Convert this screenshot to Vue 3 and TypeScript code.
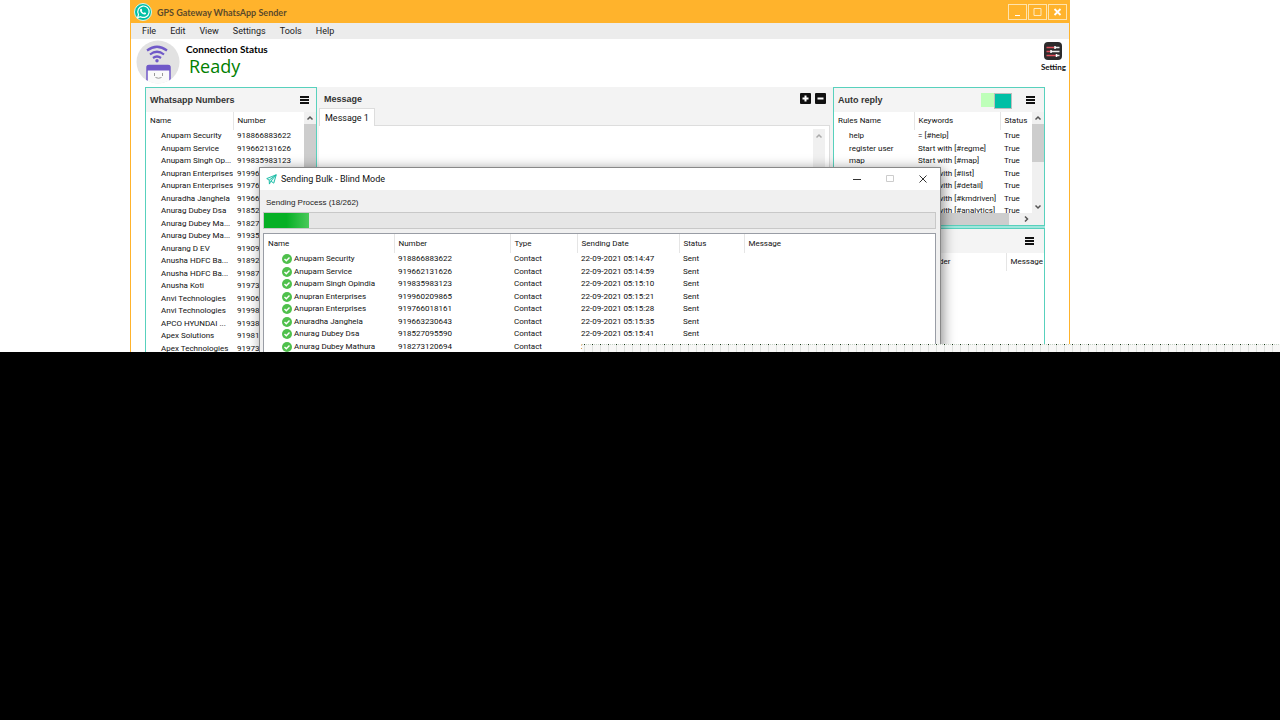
<script setup lang="ts">
import { ref } from 'vue'

interface Contact { name: string; number: string }
interface Rule { name: string; keyword: string }
interface Sent { name: string; number: string; date: string }

const menus: string[] = ['File', 'Edit', 'View', 'Settings', 'Tools', 'Help']

const contacts: Contact[] = [
  { name: 'Anupam Security', number: '918866883622' },
  { name: 'Anupam Service', number: '919662131626' },
  { name: 'Anupam Singh Op...', number: '919835983123' },
  { name: 'Anupran Enterprises', number: '91996' },
  { name: 'Anupran Enterprises', number: '91976' },
  { name: 'Anuradha Janghela', number: '91966' },
  { name: 'Anurag Dubey Dsa', number: '91852' },
  { name: 'Anurag Dubey Ma...', number: '91827' },
  { name: 'Anurag Dubey Ma...', number: '91935' },
  { name: 'Anurang D EV', number: '91909' },
  { name: 'Anusha HDFC Ba...', number: '91892' },
  { name: 'Anusha HDFC Ba...', number: '91987' },
  { name: 'Anusha Koti', number: '91973' },
  { name: 'Anvi Technologies', number: '91906' },
  { name: 'Anvi Technologies', number: '91998' },
  { name: 'APCO HYUNDAI ...', number: '91938' },
  { name: 'Apex Solutions', number: '91981' },
  { name: 'Apex Technologies', number: '91973' },
]

const rules: Rule[] = [
  { name: 'help', keyword: '= [#help]' },
  { name: 'register user', keyword: 'Start with [#regme]' },
  { name: 'map', keyword: 'Start with [#map]' },
  { name: 'list', keyword: 'Start with [#list]' },
  { name: 'detail', keyword: 'Start with [#detail]' },
  { name: 'kmdriven', keyword: 'Start with [#kmdriven]' },
  { name: 'analytics', keyword: 'Start with [#analytics]' },
]

const sent: Sent[] = [
  { name: 'Anupam Security', number: '918866883622', date: '22-09-2021 05:14:47' },
  { name: 'Anupam Service', number: '919662131626', date: '22-09-2021 05:14:59' },
  { name: 'Anupam Singh Opindia', number: '919835983123', date: '22-09-2021 05:15:10' },
  { name: 'Anupran Enterprises', number: '919960209865', date: '22-09-2021 05:15:21' },
  { name: 'Anupran Enterprises', number: '919766018161', date: '22-09-2021 05:15:28' },
  { name: 'Anuradha Janghela', number: '919663230643', date: '22-09-2021 05:15:35' },
  { name: 'Anurag Dubey Dsa', number: '918527095590', date: '22-09-2021 05:15:41' },
  { name: 'Anurag Dubey Mathura', number: '918273120694', date: '22-09-2021 05:15:47' },
]

const autoReply = ref(true)
const message = ref('')
const done = 18
const total = 262
</script>

<template>
  <div class="page">
    <main class="stage">
      <section class="window">
        <header class="titlebar">
          <svg class="wa" viewBox="0 0 18 18" aria-hidden="true">
            <circle cx="9" cy="9" r="8.5" fill="#00bfa5" stroke="#d9f5ee" />
            <path d="M3.6 14.6l.9-3.1a5.7 5.7 0 1 1 2.2 2.2z" fill="none" stroke="#fff" stroke-width="1.2" />
            <path d="M6.5 6c.4-.5 1-.4 1.2.1l.5 1.1-.5.8c.5.9 1.2 1.6 2.2 2l.8-.7 1.300.6c.3 1-.8 1.700-1.600 1.700-2.300-.2-4.400-2.500-4.400-4.300 0-.5.2-.9.500-1.300z" fill="#fff" />
          </svg>
          <h1>GPS Gateway WhatsApp Sender</h1>
          <div class="winbtns">
            <button type="button" aria-label="Minimize"><svg viewBox="0 0 17 14"><path d="M6 10.500h5" stroke="#fff" /></svg></button>
            <button type="button" aria-label="Maximize"><svg viewBox="0 0 17 14"><path d="M5 3.500h7v7h-7z" fill="none" stroke="#ffe9be" /></svg></button>
            <button type="button" aria-label="Close"><svg viewBox="0 0 17 14"><path d="M5.500 4l6 6m0-6l-6 6" stroke="#fff" stroke-width="1.800" /></svg></button>
          </div>
        </header>
        <nav class="menubar">
          <button v-for="m in menus" :key="m" type="button">{{ m }}</button>
        </nav>
        <div class="status">
          <svg class="bot" viewBox="0 0 44 44" aria-hidden="true">
            <clipPath id="disc"><circle cx="22" cy="22" r="21.500" /></clipPath>
            <circle cx="22" cy="22" r="21.500" fill="#e2e2e2" />
            <g clip-path="url(#disc)">
              <rect x="11" y="25.500" width="23" height="22" rx="2" fill="#fafafa" stroke="#7059c8" stroke-width="1.500" />
              <path d="M11 30.500v-4q0-1.500 1.500-1.500h20q1.500 0 1.500 1.500v4z" fill="#7059c8" />
              <path d="M18.500 33v3m8-3v3" stroke="#999" />
              <path d="M19.500 37.500q3 1.500 6 0" fill="none" stroke="#999" />
            </g>
            <g fill="none" stroke="#7059c8" stroke-width="2.200">
              <path d="M11 10.500Q21 3 31 10.500" /><path d="M14 14.500Q21 9 28 14.500" /><path d="M17 18Q21 15 25 18" />
            </g>
            <circle cx="21" cy="20.800" r="1.700" fill="#7059c8" />
          </svg>
          <div class="state">
            <h2>Connection Status</h2>
            <p>Ready</p>
          </div>
          <button class="setting" type="button">
            <svg viewBox="0 0 18 18" aria-hidden="true">
              <rect width="18" height="18" rx="4" fill="#2d2b2c" />
              <path d="M2.500 5.500h8m-8 4h4m-4 4h10" stroke="#e04f5b" stroke-width="1.500" />
              <path d="M11 5.500h4.500m-8.500 4h8.500m-3 4h3" stroke="#eee" stroke-width="1.500" />
              <path d="M11 4v3m-4 1v3m5.500 1v3" stroke="#fff" stroke-width="1.500" />
            </svg>
            Setting
          </button>
        </div>

        <div class="workspace">
          <section class="panel contacts">
            <div class="phead">
              <h3>Whatsapp Numbers</h3>
              <button class="burger" type="button" aria-label="Numbers menu"><i /><i /><i /></button>
            </div>
            <div class="pbody">
              <table class="list">
                <colgroup><col class="c-name"><col></colgroup>
                <thead><tr><th>Name</th><th>Number</th></tr></thead>
                <tbody>
                  <tr v-for="(c, i) in contacts" :key="i"><td class="first">{{ c.name }}</td><td>{{ c.number }}</td></tr>
                </tbody>
              </table>
              <div class="vscroll">
                <svg viewBox="0 0 12 12"><path d="M3.500 7.500L6 5l2.500 2.500" /></svg>
                <span class="thumb long" />
              </div>
            </div>
          </section>

          <section class="compose">
            <div class="chead">
              <h3>Message</h3>
              <div class="pm">
                <button type="button" aria-label="Add message"><svg viewBox="0 0 11 11"><rect width="11" height="11" rx="1" /><path d="M5.500 2.500v6m-3-3h6" /></svg></button>
                <button type="button" aria-label="Remove message"><svg viewBox="0 0 11 11"><rect width="11" height="11" rx="1" /><path d="M2.500 5.500h6" /></svg></button>
              </div>
            </div>
            <div class="tabs"><button type="button">Message 1</button></div>
            <div class="editor">
              <textarea v-model="message" aria-label="Message text" />
              <div class="vscroll off"><svg viewBox="0 0 12 12"><path d="M3.500 7.500L6 5l2.500 2.500" /></svg></div>
            </div>
          </section>

          <div class="side">
            <section class="panel reply">
              <div class="phead">
                <h3 id="auto">Auto reply</h3>
                <input v-model="autoReply" class="toggle" type="checkbox" aria-labelledby="auto">
                <button class="burger" type="button" aria-label="Auto reply menu"><i /><i /><i /></button>
              </div>
              <div class="pbody">
                <div class="clip">
                  <table class="list">
                    <colgroup><col class="c-rule"><col class="c-key"><col></colgroup>
                    <thead><tr><th>Rules Name</th><th>Keywords</th><th>Status</th></tr></thead>
                    <tbody>
                      <tr v-for="r in rules" :key="r.name"><td class="first">{{ r.name }}</td><td>{{ r.keyword }}</td><td>True</td></tr>
                    </tbody>
                  </table>
                </div>
                <div class="vscroll">
                  <svg viewBox="0 0 12 12"><path d="M3.500 7.500L6 5l2.500 2.500" /></svg>
                  <span class="thumb short" />
                  <svg class="down" viewBox="0 0 12 12"><path d="M3.500 4.500L6 7l2.500-2.500" /></svg>
                </div>
              </div>
              <div class="hscroll">
                <span class="hthumb" />
                <svg viewBox="0 0 12 12"><path d="M5 3.500L7.500 6 5 8.500" /></svg>
              </div>
            </section>
            <section class="panel log">
              <div class="phead">
                <button class="burger" type="button" aria-label="Log menu"><i /><i /><i /></button>
              </div>
              <table class="list">
                <colgroup><col class="c-date"><col class="c-sender"><col></colgroup>
                <thead><tr><th /><th>Sender</th><th>Message</th></tr></thead>
              </table>
            </section>
          </div>
        </div>

        <section class="dialog" role="dialog" aria-labelledby="dlg">
          <header>
            <svg class="plane" viewBox="0 0 12 12" aria-hidden="true">
              <path d="M.8 5L11.200.8 8.500 10 5.300 7.800 3.700 11 3.500 6.700z" fill="#e2faf6" stroke="#13b8a2" /><path d="M3.500 6.700L11 1 5.300 7.800" fill="none" stroke="#13b8a2" />
            </svg>
            <h2 id="dlg">Sending Bulk - Blind Mode</h2>
            <div class="dbtns">
              <button type="button" aria-label="Minimize"><svg viewBox="0 0 10 10"><path d="M1 5.500h8" stroke="#333" /></svg></button>
              <button type="button" aria-label="Maximize" disabled><svg viewBox="0 0 10 10"><path d="M1.500 1.500h7v6h-7z" fill="none" stroke="#ccc" /></svg></button>
              <button type="button" aria-label="Close"><svg viewBox="0 0 10 10"><path d="M1.500 1.500l7 7m0-7l-7 7" stroke="#333" /></svg></button>
            </div>
          </header>
          <p class="process">Sending Process ({{ done }}/{{ total }})</p>
          <div class="progress" role="progressbar" :aria-valuenow="done" :aria-valuemax="total">
            <span :style="{ width: (done / total * 97) + '%' }" />
          </div>
          <div class="results">
            <table class="list">
              <colgroup><col class="d1"><col class="d2"><col class="d3"><col class="d4"><col class="d5"><col></colgroup>
              <thead><tr><th>Name</th><th>Number</th><th>Type</th><th>Sending Date</th><th>Status</th><th>Message</th></tr></thead>
              <tbody>
                <tr v-for="(s, i) in sent" :key="i">
                  <td>
                    <span class="who"><svg viewBox="0 0 10 10" aria-hidden="true"><circle cx="5" cy="5" r="5" fill="#4fc04c" /><path d="M2.500 5l1.800 1.800 3.200-3.300" fill="none" stroke="#fff" stroke-width="1.400" /></svg>{{ s.name }}</span>
                  </td>
                  <td>{{ s.number }}</td><td>Contact</td><td>{{ s.date }}</td><td>Sent</td><td />
                </tr>
              </tbody>
            </table>
          </div>
        </section>
      </section>
      <div class="dots" />
    </main>
  </div>
</template>

<style>
body { background: #000; }
</style>

<style scoped>
* { box-sizing: border-box; }
.page { min-height: 100vh; background: #000; font: 8px/12px Roboto, "Liberation Sans", sans-serif; color: #111; }
.stage { position: relative; height: 352px; padding: 0 210px 0 130px; overflow: hidden; background: #fff; }
.window { position: relative; display: flex; flex-direction: column; height: 100%; background: #fff; border: solid #ffb32c; border-width: 0 1px; }
h1, h2, h3, p { margin: 0; }
button { margin: 0; padding: 0; border: 0; background: none; color: inherit; font: inherit; }
svg { display: block; flex: none; }

.titlebar { display: flex; align-items: center; flex: none; height: 23px; padding: 0 2px 0 3px; background: #ffb32c; }
.wa { width: 18px; height: 18px; }
.titlebar h1 { margin-left: 5px; padding-top: 2px; font: bold 9px/14px Lato, sans-serif; color: #5b4a2a; }
.winbtns { display: flex; gap: 1px; margin-left: auto; }
.winbtns button { width: 19px; height: 16px; border: 1px solid #ffe3ad; }
.winbtns svg { width: 17px; height: 14px; }

.menubar { display: flex; flex: none; gap: 14px; height: 16px; padding-left: 11px; background: #ececec; font: 9px/16px Roboto, sans-serif; color: #222; }

.status { display: flex; flex: none; height: 48px; padding: 1px 3px 0 5px; }
.bot { width: 44px; height: 44px; }
.state { margin-left: 6px; padding-top: 2px; }
.state h2 { font: bold 10px/14px Lato, sans-serif; color: #000; }
.state p { padding-left: 3px; font: 18px/21px "Open Sans", sans-serif; color: #008000; }
.setting { display: flex; flex-direction: column; align-items: center; align-self: flex-start; margin-left: auto; padding-top: 2px; font: bold 8px/14px Lato, sans-serif; }
.setting svg { width: 18px; height: 18px; }

.workspace { display: flex; flex: 1; min-height: 0; padding: 0 24px 0 14px; background: #fff; }
.panel { border: 1px solid #58d1bd; background: #fff; overflow: hidden; }
.contacts { width: 172px; flex: none; border-bottom: 0; }
.phead { display: flex; align-items: center; height: 24px; padding: 0 7px 0 4px; background: #f4f4f4; }
h3 { font: bold 9px/12px "Liberation Sans", Arial, sans-serif; color: #333; }
.burger { display: grid; gap: 1px; width: 9px; margin-left: auto; }
.burger i { height: 2px; background: #111; }
.pbody { display: flex; }

.list { width: 100%; border-collapse: collapse; table-layout: fixed; }
.list th, .list td { padding: 0 0 0 4px; overflow: hidden; text-align: left; white-space: nowrap; font-weight: normal; }
.list th + th { border-left: 1px solid #e5e5e5; }
.list th { height: 18px; }
.list tbody tr { height: 12px; line-height: 12px; }
.list tbody tr:nth-child(even) { height: 13px; line-height: 13px; }
.list td.first { padding-left: 15px; }
.c-name { width: 87px; }
.c-rule { width: 80px; }
.c-key { width: 86px; }
.c-date { width: 87px; }
.c-sender { width: 85px; }

.vscroll { display: flex; flex: none; flex-direction: column; width: 12px; background: #f0f0f0; }
.vscroll svg, .hscroll svg { width: 12px; height: 12px; fill: none; stroke: #555; stroke-width: 1.500; }
.thumb { background: #cdcdcd; }
.long { height: 60px; }
.short { height: 38px; }
.down { margin-top: auto; }

.compose { display: flex; flex: 1; flex-direction: column; min-width: 0; padding: 0 3px 0 2px; background: #f3f3f3; }
.chead { display: flex; align-items: center; justify-content: space-between; height: 21px; padding: 2px 4px 0 5px; }
.pm { display: flex; gap: 4px; }
.pm svg { width: 11px; height: 11px; stroke: #fff; stroke-width: 2; }
.pm rect { fill: #111; stroke: none; }
.tabs { display: flex; height: 18px; border-bottom: 1px solid #ddd; }
.tabs button { height: 18px; padding: 0 5px; border: 1px solid #ddd; border-bottom: 0; background: #fff; font: 9px/16px Roboto, sans-serif; }
.editor { display: flex; flex: 1; padding: 3px 4px 0 0; border-right: 1px solid #ddd; background: #fff; }
textarea { flex: 1; border: 0; outline: 0; resize: none; background: #fff; font: inherit; }
.off svg { margin-top: 1px; stroke: #aaa; }

.side { display: flex; flex: none; flex-direction: column; gap: 2px; width: 212px; background: #a0e6dc; }
.reply { height: 139px; }
.reply .phead { padding-right: 9px; }
.toggle { display: flex; appearance: none; width: 31px; height: 14px; margin: 0 0 0 auto; background: #beffb9; }
.toggle::after { content: ""; width: 16px; height: 14px; margin-left: auto; border: 1px solid #bdbdbd; background: #00bfa5; }
.toggle:not(:checked)::after { margin-left: 0; background: #999; }
.toggle + .burger { margin-left: 14px; }
.clip { flex: 1; height: 101px; overflow: hidden; }
.hscroll { display: flex; align-items: center; height: 12px; padding-right: 12px; background: #f0f0f0; }
.hthumb { width: 175px; height: 12px; background: #cdcdcd; }
.hscroll svg { margin-left: 11px; }
.log { flex: 1; border-bottom: 0; }
.log .phead { padding-right: 10px; }

.dialog { position: absolute; left: 128px; right: 128px; top: 167px; bottom: 0; padding: 0 4px 0 3px; border: 1px solid #888; border-bottom: 0; background: #f0f0f0; box-shadow: 2px 2px 12px rgba(0, 0, 0, .45); }
.dialog header { display: flex; align-items: center; height: 22px; margin: 0 -4px 0 -3px; padding: 0 7px 0 6px; background: #fff; }
.plane { width: 11px; height: 11px; }
.dialog h2 { margin-left: 4px; font: 9px/14px Roboto, sans-serif; color: #111; }
.dbtns { display: flex; gap: 23px; margin-left: auto; padding-right: 5px; }
.dbtns svg { width: 10px; height: 10px; }
.process { height: 22px; padding: 0 3px; font: 8px/25px "Liberation Sans", Arial, sans-serif; color: #222; }
.progress { height: 17px; border: 1px solid #c8c8c8; background: #e6e6e6; }
.progress span { display: block; height: 100%; background: linear-gradient(90deg, #06b025 50%, #4ac95a); }
.results { height: 130px; margin-top: 4px; border: 1px solid #999da5; background: #fff; }
.results th { height: 19px; }
.who { display: flex; align-items: center; gap: 2px; padding-left: 14px; }
.who svg { width: 10px; height: 10px; }
.d1 { width: 130px; }
.d2 { width: 116px; }
.d3 { width: 67px; }
.d4 { width: 102px; }
.d5 { width: 65px; }

.dots {
  position: absolute; left: 582px; right: 0; bottom: 0; height: 8px;
  background:
    linear-gradient(90deg, #173817 1px, transparent 1px) 2px 0 / 8px 1px repeat-x,
    linear-gradient(90deg, #c5d3c5 1px, transparent 1px) 0 0 / 2px 1px repeat-x,
    linear-gradient(90deg, #dfe3df 1px, transparent 1px) 2px 0 / 8px 8px,
    #f7f7f6;
}
</style>
